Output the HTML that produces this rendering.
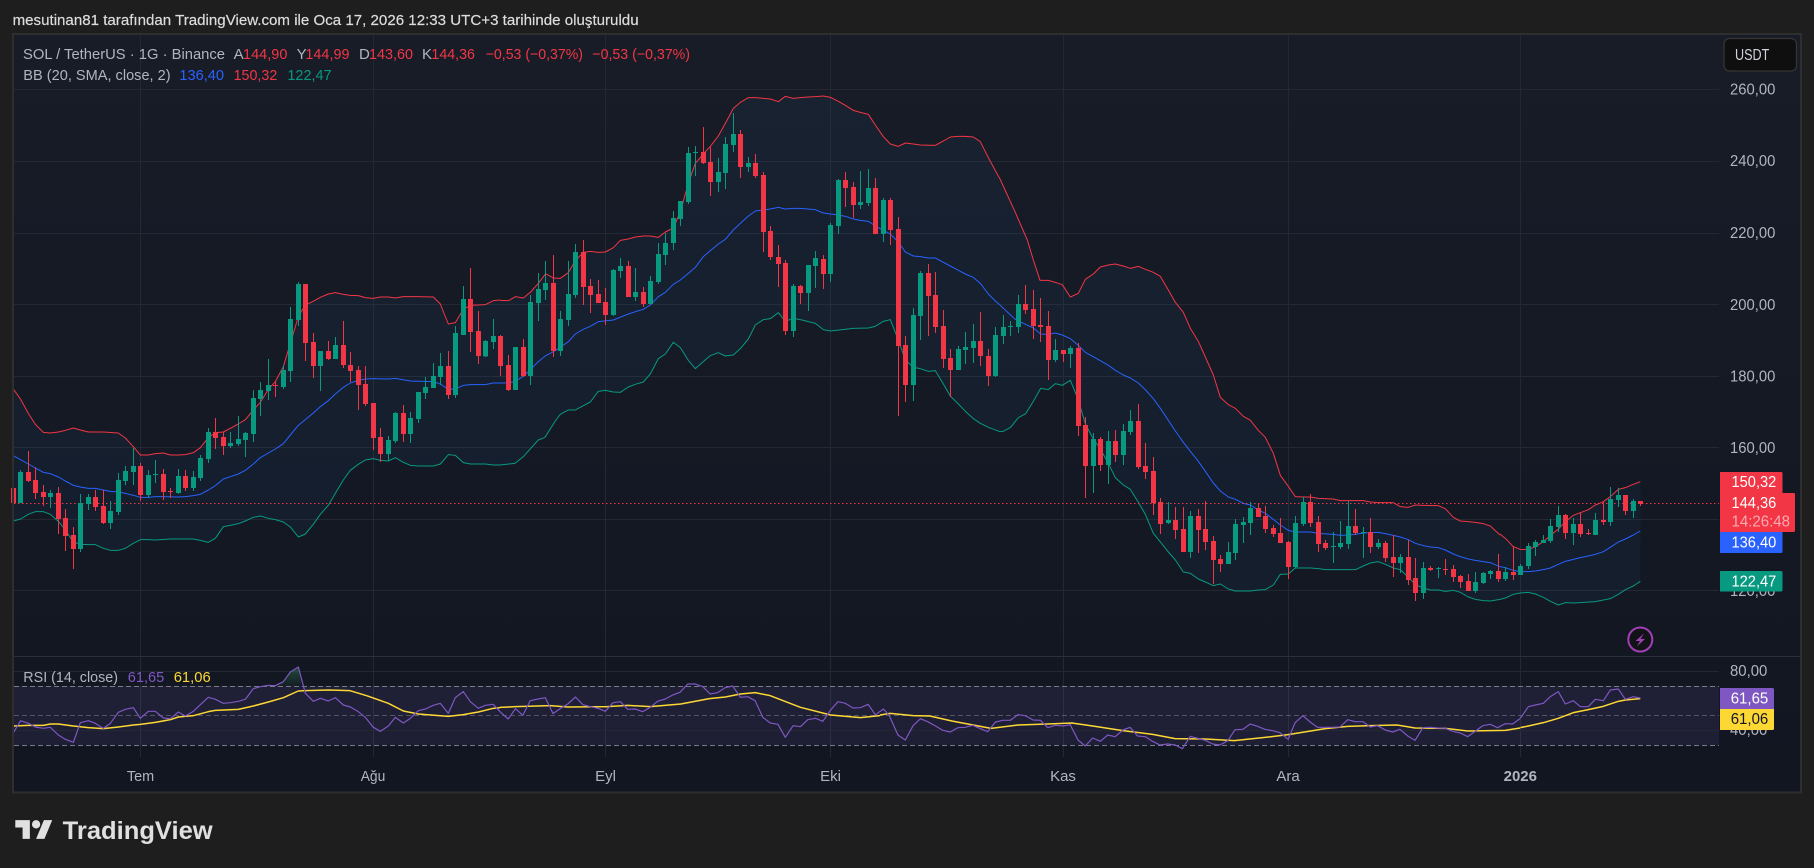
<!DOCTYPE html>
<html lang="tr">
<head>
<meta charset="utf-8">
<title>SOL / TetherUS</title>
<style>
html,body{margin:0;padding:0;background:#1e1e1e;width:1814px;height:868px;overflow:hidden}
svg{position:absolute;left:0;top:0;display:block}
text{font-family:"Liberation Sans",sans-serif}
.f{fill:rgba(33,150,243,.05);fill-rule:evenodd;stroke:none}
.l{fill:none;stroke-width:3;stroke-linejoin:round}
.u{stroke:#f23645}.m{stroke:#2962ff}.w{stroke:#089981}
.rb{fill:none;stroke:#f23645;stroke-width:5}
.rw{fill:none;stroke:#f23645;stroke-width:1}
.gb{fill:none;stroke:#089981;stroke-width:5}
.gw{fill:none;stroke:#089981;stroke-width:1}
.r{fill:none;stroke:#7e57c2;stroke-width:1.2;vector-effect:non-scaling-stroke;stroke-linejoin:round}
.y{fill:none;stroke:#fdd835;stroke-width:1.5;vector-effect:non-scaling-stroke;stroke-linejoin:round}
.a{font-size:16px;fill:#b2b5be}
.lg{font-size:15px}
.lb{font-size:16px;fill:#fff}
.t{font-size:15px;fill:#b2b5be}
</style>
</head>
<body>
<svg width="1814" height="868" viewBox="0 0 1814 868" xmlns="http://www.w3.org/2000/svg">
<defs>
<linearGradient id="bg" x1="0" y1="0" x2="0" y2="1"><stop offset="0" stop-color="#181c27"/><stop offset="1" stop-color="#121621"/></linearGradient>
<linearGradient id="ob" x1="0" y1="0" x2="0" y2="1"><stop offset="0" stop-color="#2e7d4f" stop-opacity=".5"/><stop offset="1" stop-color="#2e7d4f" stop-opacity=".08"/></linearGradient>
</defs>
<rect width="1814" height="868" fill="#1e1e1e"/>
<text x="12.6" y="25" font-size="15" fill="#dcdcdc" stroke="#dcdcdc" stroke-width=".2" textLength="626" lengthAdjust="spacingAndGlyphs">mesutinan81 tarafından TradingView.com ile Oca 17, 2026 12:33 UTC+3 tarihinde oluşturuldu</text>
<rect x="13" y="34" width="1788" height="758" fill="url(#bg)"/>

<!-- grid -->
<path fill="none" stroke="#242833" stroke-width="1" d="M14 89.5H1719M14 161.5H1719M14 233.5H1719M14 304.5H1719M14 376.5H1719M14 447.5H1719M14 519.5H1719M14 590.5H1719M140.5 35V757M373.5 35V757M605.5 35V757M830.5 35V757M1063.5 35V757M1288.5 35V757M1520.5 35V757"/>

<!-- RSI band -->
<rect x="14" y="686" width="1705" height="59" fill="#7e57c2" fill-opacity=".12"/>
<path fill="none" stroke="#242833" stroke-width="1" d="M14 671.5H1719M14 730.5H1719"/>
<path d="M14 686.5H1719M14 745.5H1719" fill="none" stroke="#787b86" stroke-width="1" stroke-dasharray="5 3"/>
<path d="M14 715.5H1719" fill="none" stroke="#787b86" stroke-opacity=".6" stroke-width="1" stroke-dasharray="5 3"/>
<path d="M13 656.5H1801" stroke="#2b2f3a" stroke-width="1" fill="none"/>

<!-- BB zone 1 -->
<g transform="translate(0,280) scale(.33333)">
<path class="f" d="M40 327 62 358 85 400 106 433 130 457 151 459 175 456 196 451 220 444 241 450 265 456 310 456 355 459 376 474 400 500 421 525 445 525 466 521 490 519 511 525 535 525 556 524 580 518 601 503 625 473 646 458 670 456 691 445 715 432 736 419 760 390 781 367 805 328 826 305 850 260 871 190 895 110 916 75 940 64 961 52 985 42 1006 38 1030 43 1051 46 1075 47 1096 53 1120 55 1141 51 1165 51 1186 54 1210 50 1255 50 1300 51 1321 72 1345 132 1366 128 1390 88 1411 76 1456 74 1480 62 1500 60V1000H40ZM40 723 62 717 85 703 106 695 130 695 151 703 175 724 196 750 220 786 241 793 265 794 286 794 310 805 331 811 355 811 376 805 400 790 421 779 445 779 466 780 511 777 580 777 601 781 625 787 646 775 670 740 691 736 715 731 736 723 760 712 781 708 805 715 826 719 850 726 871 741 895 771 916 762 940 733 961 703 985 676 1006 640 1030 600 1051 571 1075 553 1096 540 1120 536 1141 541 1165 543 1186 533 1210 547 1231 556 1255 558 1300 558 1321 552 1345 524 1366 526 1390 548 1411 552 1456 552 1480 555 1500 555V1000H40Z"/>
<path class="l u" d="M40 327 62 358 85 400 106 433 130 457 151 459 175 456 196 451 220 444 241 450 265 456 310 456 355 459 376 474 400 500 421 525 445 525 466 521 490 519 511 525 535 525 556 524 580 518 601 503 625 473 646 458 670 456 691 445 715 432 736 419 760 390 781 367 805 328 826 305 850 260 871 190 895 110 916 75 940 64 961 52 985 42 1006 38 1030 43 1051 46 1075 47 1096 53 1120 55 1141 51 1165 51 1186 54 1210 50 1255 50 1300 51 1321 72 1345 132 1366 128 1390 88 1411 76 1456 74 1480 62 1500 60"/>
<path class="l w" d="M40 723 62 717 85 703 106 695 130 695 151 703 175 724 196 750 220 786 241 793 265 794 286 794 310 805 331 811 355 811 376 805 400 790 421 779 445 779 466 780 511 777 580 777 601 781 625 787 646 775 670 740 691 736 715 731 736 723 760 712 781 708 805 715 826 719 850 726 871 741 895 771 916 762 940 733 961 703 985 676 1006 640 1030 600 1051 571 1075 553 1096 540 1120 536 1141 541 1165 543 1186 533 1210 547 1231 556 1255 558 1300 558 1321 552 1345 524 1366 526 1390 548 1411 552 1456 552 1480 555 1500 555"/>
<path class="l m" d="M40 527 62 539 85 552 106 564 130 577 151 581 175 591 196 603 220 616 241 621 265 625 286 625 310 630 331 634 355 636 376 640 400 646 421 652 445 652 466 650 490 650 535 651 556 650 580 647 601 643 625 630 646 617 670 597 691 590 715 582 736 571 760 552 781 533 805 519 826 507 850 491 871 465 895 436 916 419 940 399 961 380 985 362 1006 342 1030 322 1051 309 1075 301 1096 297 1120 296 1165 297 1186 295 1231 303 1300 305 1321 312 1345 328 1366 327 1390 316 1411 314 1456 314 1480 309 1500 309"/>
</g>
<!-- BB zone 2 -->
<g transform="translate(500,80) scale(.33333)">
<path class="f" d="M0 661 25 662 46 650 70 654 92 636 115 610 137 581 160 594 181 595 205 578 226 542 250 517 271 514 295 517 316 516 340 503 361 481 385 477 406 471 430 468 451 468 475 472 496 456 520 444 541 395 565 310 586 250 610 222 631 199 655 168 676 130 700 85 721 67 745 53 766 53 790 55 811 57 835 65 856 49 880 55 901 53 925 51 946 50 970 48 991 52 1015 64 1036 76 1060 91 1081 97 1105 103 1126 135 1150 170 1171 192 1195 199 1216 189 1240 192 1261 195 1306 196 1330 183 1351 171 1375 169 1396 169 1420 171 1441 185 1465 233 1486 272 1500 297V1300H0ZM0 1155 45 1150 70 1130 115 1080 135 1072 168 1020 181 1003 205 990 226 990 250 977 271 966 295 934 316 931 340 936 361 937 385 921 406 913 430 906 451 882 475 836 496 822 520 787 541 803 565 841 586 866 610 845 631 827 655 818 676 828 700 825 721 806 745 777 766 735 790 719 811 716 835 698 856 724 880 715 901 719 946 730 970 749 991 753 1060 745 1105 744 1126 739 1150 724 1171 719 1195 780 1216 840 1240 862 1261 866 1285 874 1306 872 1330 912 1351 948 1375 972 1396 994 1420 1016 1441 1030 1465 1042 1500 1055V1300H0Z"/>
<path class="l u" d="M0 661 25 662 46 650 70 654 92 636 115 610 137 581 160 594 181 595 205 578 226 542 250 517 271 514 295 517 316 516 340 503 361 481 385 477 406 471 430 468 451 468 475 472 496 456 520 444 541 395 565 310 586 250 610 222 631 199 655 168 676 130 700 85 721 67 745 53 766 53 790 55 811 57 835 65 856 49 880 55 901 53 925 51 946 50 970 48 991 52 1015 64 1036 76 1060 91 1081 97 1105 103 1126 135 1150 170 1171 192 1195 199 1216 189 1240 192 1261 195 1306 196 1330 183 1351 171 1375 169 1396 169 1420 171 1441 185 1465 233 1486 272 1500 297"/>
<path class="l w" d="M0 1155 45 1150 70 1130 115 1080 135 1072 168 1020 181 1003 205 990 226 990 250 977 271 966 295 934 316 931 340 936 361 937 385 921 406 913 430 906 451 882 475 836 496 822 520 787 541 803 565 841 586 866 610 845 631 827 655 818 676 828 700 825 721 806 745 777 766 735 790 719 811 716 835 698 856 724 880 715 901 719 946 730 970 749 991 753 1060 745 1105 744 1126 739 1150 724 1171 719 1195 780 1216 840 1240 862 1261 866 1285 874 1306 872 1330 912 1351 948 1375 972 1396 994 1420 1016 1441 1030 1465 1042 1500 1055"/>
<path class="l m" d="M0 909 25 909 46 904 70 889 92 868 115 845 137 827 160 815 181 802 205 785 226 762 250 748 271 739 295 725 340 720 385 702 406 695 430 688 451 675 475 650 496 637 520 613 541 600 565 580 586 562 610 530 631 512 655 492 676 478 700 450 721 430 745 408 766 393 790 390 811 387 835 382 856 387 880 385 901 385 946 389 970 399 991 402 1015 405 1036 409 1060 417 1081 421 1105 424 1126 438 1150 451 1171 462 1195 486 1216 516 1240 528 1261 530 1285 534 1306 534 1330 547 1351 558 1375 571 1396 582 1420 592 1441 610 1465 642 1486 663 1500 675"/>
</g>
<!-- BB zone 3 -->
<g transform="translate(1000,240) scale(.33333)">
<path class="f" d="M0 -183 45 -85 82 0 100 60 120 121 145 121 166 127 187 134 211 171 235 160 256 118 280 102 301 81 325 75 346 72 370 78 391 85 415 79 436 88 460 97 481 109 505 150 526 187 550 217 571 265 595 304 616 351 640 405 661 472 685 494 706 505 730 529 751 541 775 571 796 592 820 640 841 706 865 739 886 770 910 771 931 771 955 775 1000 777 1021 782 1045 782 1090 782 1111 786 1135 788 1180 788 1201 800 1225 802 1246 795 1270 796 1315 797 1336 806 1360 832 1381 843 1405 845 1426 847 1450 851 1471 858 1500 885V1200H0ZM0 575 10 574 32 562 55 533 77 521 100 484 122 445 145 449 166 431 187 436 211 421 235 480 256 552 280 597 301 627 325 670 346 713 370 735 391 748 415 787 436 823 460 880 481 906 505 936 526 960 550 996 571 1000 595 1017 616 1026 640 1037 661 1032 685 1047 706 1053 751 1053 775 1050 796 1049 820 1035 841 1003 865 1002 886 984 931 984 955 986 976 989 1066 989 1090 978 1111 969 1135 965 1156 973 1180 984 1201 989 1225 1012 1246 1034 1270 1044 1291 1050 1315 1050 1336 1054 1360 1051 1381 1057 1405 1071 1426 1078 1450 1082 1471 1083 1500 1078V1200H0Z"/>
<path class="l u" d="M0 -183 45 -85 82 0 100 60 120 121 145 121 166 127 187 134 211 171 235 160 256 118 280 102 301 81 325 75 346 72 370 78 391 85 415 79 436 88 460 97 481 109 505 150 526 187 550 217 571 265 595 304 616 351 640 405 661 472 685 494 706 505 730 529 751 541 775 571 796 592 820 640 841 706 865 739 886 770 910 771 931 771 955 775 1000 777 1021 782 1045 782 1090 782 1111 786 1135 788 1180 788 1201 800 1225 802 1246 795 1270 796 1315 797 1336 806 1360 832 1381 843 1405 845 1426 847 1450 851 1471 858 1500 885"/>
<path class="l w" d="M0 575 10 574 32 562 55 533 77 521 100 484 122 445 145 449 166 431 187 436 211 421 235 480 256 552 280 597 301 627 325 670 346 713 370 735 391 748 415 787 436 823 460 880 481 906 505 936 526 960 550 996 571 1000 595 1017 616 1026 640 1037 661 1032 685 1047 706 1053 751 1053 775 1050 796 1049 820 1035 841 1003 865 1002 886 984 931 984 955 986 976 989 1066 989 1090 978 1111 969 1135 965 1156 973 1180 984 1201 989 1225 1012 1246 1034 1270 1044 1291 1050 1315 1050 1336 1054 1360 1051 1381 1057 1405 1071 1426 1078 1450 1082 1471 1083 1500 1078"/>
<path class="l m" d="M0 195 25 219 46 238 70 250 100 264 122 282 145 283 166 279 187 285 211 296 235 316 256 337 280 350 301 362 325 376 346 391 370 405 391 414 415 429 436 449 460 476 481 505 505 541 526 573 550 607 571 634 595 664 616 694 640 729 661 753 685 771 706 778 730 790 751 795 775 810 796 820 820 838 841 855 865 871 886 876 931 876 955 880 1000 883 1021 886 1045 885 1066 883 1090 879 1135 877 1156 881 1180 886 1201 891 1225 899 1246 910 1270 917 1291 921 1315 923 1336 930 1360 942 1381 950 1405 957 1426 961 1450 965 1471 968 1500 980"/>
</g>
<!-- BB zone 4 -->
<g transform="translate(1500,440) scale(.33333)">
<path class="f" d="M0 282 16 295 40 320 61 328 85 329 106 320 130 305 151 287 175 267 196 245 220 226 241 218 265 209 286 195 310 185 331 170 355 148 376 143 400 133 421 125V600H0ZM0 478 16 474 40 463 61 459 85 457 106 462 130 472 151 484 175 495 196 488 220 489 241 488 286 485 310 480 331 476 355 463 376 449 400 438 421 424V600H0Z"/>
<path class="l u" d="M0 282 16 295 40 320 61 328 85 329 106 320 130 305 151 287 175 267 196 245 220 226 241 218 265 209 286 195 310 185 331 170 355 148 376 143 400 133 421 125"/>
<path class="l w" d="M0 478 16 474 40 463 61 459 85 457 106 462 130 472 151 484 175 495 196 488 220 489 241 488 286 485 310 480 331 476 355 463 376 449 400 438 421 424"/>
<path class="l m" d="M0 380 16 383 40 391 61 395 85 395 106 393 130 389 151 384 175 373 196 364 220 358 241 353 265 348 286 343 310 335 331 322 355 306 376 297 400 285 421 273"/>
</g>

<!-- last price line -->
<path d="M14 503.5H1719" stroke="#f23645" stroke-width="1" stroke-dasharray="1.5 2.5" fill="none"/>

<!-- candles -->
<g transform="translate(0,280) scale(1,.33333)">
<path class="rw" d="M13.5 624V695M28.5 513V606M35.5 562V657M43.5 615V678M58.5 621V762M65.5 687V813M73.5 741V867M95.5 630V693M103.5 630V732M140.5 549V663M163.5 567V660M170.5 624V654M185.5 570V633M215.5 414V507M223.5 456V525M275.5 303V351M305.5 12V243M313.5 159V294M328.5 183V240M343.5 123V264M350.5 216V306M358.5 258V390M365.5 258V378M373.5 369V510M380.5 444V546M403.5 375V486M448.5 213V357M470.5 -36V216M478.5 93V252"/>
<path class="rb" d="M13.5 624V669M28.5 576V603M35.5 600V639M43.5 636V651M58.5 639V717M65.5 714V768M73.5 765V807M95.5 651V681M103.5 678V729M140.5 558V645M163.5 582V636M170.5 633V636M185.5 588V624M215.5 456V474M223.5 471V498M275.5 315V318M305.5 12V189M313.5 186V258M328.5 213V237M343.5 195V255M350.5 255V273M358.5 270V315M365.5 312V372M373.5 369V474M380.5 471V522M403.5 399V462M448.5 258V345M470.5 57V156M478.5 153V228"/>
<path class="gw" d="M20.5 570V669M50.5 630V684M80.5 642V816M88.5 642V690M110.5 663V747M118.5 579V705M125.5 558V615M133.5 504V615M148.5 570V654M155.5 540V609M178.5 567V642M193.5 573V633M200.5 525V603M208.5 444V549M230.5 456V504M238.5 408V498M245.5 456V531M253.5 330V486M260.5 306V408M268.5 237V360M283.5 255V327M290.5 81V306M298.5 6V138M320.5 213V333M335.5 171V237M388.5 468V543M395.5 396V489M410.5 396V489M418.5 336V429M425.5 291V357M433.5 249V324M440.5 219V315M455.5 138V354M463.5 18V165M485.5 180V231M493.5 117V207"/>
<path class="gb" d="M20.5 576V669M50.5 639V651M80.5 669V807M88.5 651V672M110.5 693V729M118.5 600V696M125.5 573V603M133.5 558V576M148.5 585V645M155.5 582V585M178.5 588V639M193.5 591V624M200.5 534V594M208.5 456V537M230.5 489V498M238.5 477V492M245.5 459V480M253.5 354V462M260.5 330V357M268.5 315V333M283.5 270V321M290.5 117V273M298.5 12V120M320.5 213V258M335.5 195V237M388.5 480V522M395.5 399V483M410.5 414V462M418.5 336V417M425.5 321V339M433.5 288V324M440.5 258V291M455.5 159V345M463.5 57V165M485.5 183V229M493.5 168V186"/>
</g>
<g transform="translate(0,80) scale(1,.33333)">
<path class="rw" d="M500.5 765V888M508.5 825V933M523.5 777V891M553.5 525V831M583.5 480V675M590.5 597V699M598.5 600V669M605.5 624V735M628.5 543V651M643.5 621V681M703.5 141V252M710.5 201V348M740.5 150V294M755.5 222V294M763.5 276V516M770.5 438V540M778.5 495V621M785.5 540V765M800.5 615V672M823.5 525V627M845.5 276V381M853.5 306V414M875.5 294V462M890.5 354V495M898.5 411V1008M905.5 768V966M928.5 552V768M935.5 576V759M943.5 690V864M950.5 807V951M980.5 696V858M988.5 807V918"/>
<path class="rb" d="M500.5 768V858M508.5 855V930M523.5 801V888M553.5 609V813M583.5 516V621M590.5 618V645M598.5 642V669M605.5 666V705M628.5 558V651M643.5 636V672M703.5 216V249M710.5 246V306M740.5 162V261M755.5 249V288M763.5 285V456M770.5 453V531M778.5 531V552M785.5 549V753M800.5 618V639M823.5 537V582M845.5 300V324M853.5 321V375M875.5 324V462M890.5 360V450M898.5 447V798M905.5 795V915M928.5 579V648M935.5 645V741M943.5 738V837M950.5 834V870M980.5 783V828M988.5 828V888"/>
<path class="gw" d="M515.5 801V930M530.5 645V915M538.5 579V723M545.5 543V660M560.5 693V828M568.5 543V738M575.5 492V654M613.5 567V708M620.5 534V594M635.5 564V663M650.5 588V672M658.5 489V612M665.5 459V555M673.5 393V510M680.5 363V438M688.5 201V372M695.5 198V288M718.5 234V336M725.5 171V327M733.5 99V216M748.5 231V276M793.5 612V771M808.5 555V693M815.5 513V624M830.5 429V606M838.5 297V462M860.5 273V387M868.5 267V378M883.5 354V486M913.5 684V963M920.5 573V780M958.5 798V870M965.5 756V852M973.5 732V849M995.5 741V891"/>
<path class="gb" d="M515.5 801V930M530.5 666V888M538.5 627V669M545.5 609V630M560.5 717V813M568.5 642V720M575.5 516V645M613.5 570V705M620.5 558V573M635.5 636V651M650.5 603V672M658.5 522V606M665.5 489V525M673.5 414V489M680.5 363V417M688.5 219V366M695.5 216V219M718.5 276V306M725.5 192V279M733.5 162V195M748.5 249V261M793.5 618V753M808.5 555V639M815.5 534V558M830.5 435V582M838.5 300V438M860.5 366V375M868.5 324V369M883.5 360V462M913.5 705V915M920.5 579V708M958.5 807V870M965.5 801V810M973.5 783V804M995.5 765V888"/>
</g>
<g transform="translate(0,240) scale(1,.33333)">
<path class="rw" d="M1025.5 135V222M1033.5 150V297M1040.5 174V306M1048.5 213V420M1063.5 330V366M1078.5 309V588M1085.5 531V774M1100.5 591V693M1115.5 570V666M1138.5 492V687M1145.5 609V717M1153.5 651V825M1160.5 774V882M1175.5 801V897M1183.5 801V936M1198.5 807V939M1205.5 783V930M1213.5 888V1032M1220.5 945V996M1258.5 789V831M1265.5 798V879M1273.5 855V891M1280.5 834V909M1288.5 903V1017M1310.5 762V861M1318.5 828V936M1325.5 900V930M1355.5 807V885M1370.5 834V939M1385.5 903V966M1393.5 885V1011M1408.5 900V1035M1415.5 954V1083M1430.5 978V993M1445.5 957V1005M1453.5 975V1026M1460.5 1005V1044M1468.5 1002V1053M1498.5 942V1026"/>
<path class="rb" d="M1025.5 192V210M1033.5 207V258M1040.5 255V261M1048.5 258V360M1063.5 330V342M1078.5 324V558M1085.5 555V678M1100.5 597V675M1115.5 603V645M1138.5 543V681M1145.5 678V696M1153.5 693V789M1160.5 786V852M1175.5 840V870M1183.5 867V936M1198.5 828V870M1205.5 867V906M1213.5 903V960M1220.5 957V972M1258.5 804V831M1265.5 828V867M1273.5 864V882M1280.5 879V909M1288.5 906V981M1310.5 786V849M1318.5 846V912M1325.5 909V924M1355.5 858V879M1370.5 876V921M1385.5 909V954M1393.5 951V969M1408.5 951V1020M1415.5 1014V1059M1430.5 984V990M1445.5 987V990M1453.5 987V1011M1460.5 1008V1026M1468.5 1023V1053M1498.5 993V1017"/>
<path class="gw" d="M1003.5 225V312M1010.5 243V288M1018.5 165V279M1055.5 297V366M1070.5 318V384M1093.5 579V759M1108.5 573V732M1123.5 552V675M1130.5 510V585M1168.5 786V852M1190.5 813V954M1228.5 906V972M1235.5 837V960M1243.5 831V909M1250.5 786V885M1295.5 828V984M1303.5 771V858M1333.5 876V969M1340.5 843V927M1348.5 783V927M1363.5 861V954M1378.5 897V927M1400.5 942V999M1423.5 966V1077M1438.5 981V1014M1475.5 996V1059M1483.5 996V1032M1490.5 990V1017"/>
<path class="gb" d="M1003.5 261V288M1010.5 258V261M1018.5 192V261M1055.5 330V360M1070.5 324V342M1093.5 597V678M1108.5 603V675M1123.5 573V645M1130.5 543V576M1168.5 840V849M1190.5 828V936M1228.5 936V972M1235.5 852V939M1243.5 846V855M1250.5 804V849M1295.5 849V981M1303.5 786V852M1333.5 918V921M1340.5 909V921M1348.5 858V912M1363.5 876V879M1378.5 909V921M1400.5 951V969M1423.5 984V1059M1438.5 984V987M1475.5 1026V1053M1483.5 999V1029M1490.5 993V1002"/>
</g>
<g transform="translate(0,440) scale(1,.33333)">
<path class="rw" d="M1513.5 318V420M1565.5 222V297M1580.5 219V291M1588.5 267V285M1603.5 186V255M1625.5 165V225M1640.5 183V198"/>
<path class="rb" d="M1513.5 396V405M1565.5 225V279M1580.5 252V282M1588.5 279V282M1603.5 240V246M1625.5 165V213M1640.5 183V192"/>
<path class="gw" d="M1505.5 381V423M1520.5 372V405M1528.5 309V387M1535.5 300V348M1543.5 285V309M1550.5 237V309M1558.5 198V276M1573.5 234V315M1595.5 219V285M1610.5 141V258M1618.5 144V201M1633.5 177V234"/>
<path class="gb" d="M1505.5 396V417M1520.5 378V405M1528.5 318V378M1535.5 306V321M1543.5 300V309M1550.5 258V303M1558.5 225V261M1573.5 252V279M1595.5 240V285M1610.5 177V246M1618.5 165V180M1633.5 183V213"/>
</g>

<!-- RSI -->
<path d="M275.5 686 283.3 681.7 290.3 672 298.3 667 301.7 686Z" fill="url(#ob)"/>
<g transform="translate(0,640) scale(.33333)">
<path class="y" d="M40 258 85 256 130 256 151 252 175 252 220 258 265 263 310 266 355 261 400 255 421 253 466 247 511 239 535 231 580 227 625 215 646 211 715 208 760 198 805 186 850 173 895 153 916 152 985 150 1050 152 1100 167 1165 190 1210 213 1255 222 1345 229 1390 224 1435 216 1480 205 1500 203"/>
<path class="r" d="M40 278 62 242 85 250 106 261 130 265 151 262 175 285 196 298 220 307 241 248 265 242 286 250 310 265 331 250 355 217 376 208 400 203 421 235 445 214 466 214 490 234 511 236 535 216 556 228 580 214 601 194 625 172 646 178 670 190 691 188 715 184 736 178 760 146 781 140 805 136 826 137 850 125 871 96 895 81 916 160 940 184 961 175 985 183 1006 173 1030 195 1051 201 1075 215 1096 232 1120 262 1141 274 1165 258 1186 232 1210 249 1231 235 1255 212 1276 207 1300 196 1321 190 1345 220 1366 173 1390 155 1411 185 1435 205 1456 196 1480 193 1500 215"/>
</g>
<g transform="translate(240,650) scale(.40816,.33333)">
<path class="y" d="M637 172 675 170 760 167 803 171 900 170 950 166 1005 170 1080 162 1150 146 1189 141 1226 132 1262 128 1299 137 1373 172 1447 195 1520 203 1568 197"/>
<path class="r" d="M637 185 657 207 675 176 693 196 711 152 730 147 748 143 767 191 785 175 803 162 822 141 840 164 859 170 877 175 895 184 914 158 932 155 950 178 968 177 987 185 1005 172 1023 154 1042 147 1060 135 1078 127 1097 102 1115 102 1134 110 1152 132 1170 128 1189 113 1207 108 1226 142 1244 140 1262 152 1281 202 1299 219 1318 223 1336 262 1355 227 1373 230 1391 209 1410 205 1428 214 1447 180 1465 155 1483 160 1502 174 1520 173 1539 163 1557 195 1568 184"/>
</g>
<g transform="translate(880,650) scale(.40816,.33333)">
<path class="y" d="M0 195 25 190 81 197 122 198 176 213 272 235 338 225 411 222 470 219 521 228 595 242 668 253 723 266 797 267 868 272 960 260 1000 254 1091 236 1146 229 1201 227 1266 225 1311 234 1385 235 1440 243 1532 241 1568 234"/>
<path class="r" d="M0 185 8 177 22 195 44 255 62 270 81 227 99 206 117 215 136 228 154 241 172 246 191 233 209 232 227 226 246 236 264 245 283 216 301 211 319 211 338 194 356 197 375 210 393 211 411 233 430 226 448 228 466 224 485 270 503 288 521 264 540 274 558 255 576 260 595 240 613 232 631 258 650 260 668 274 686 285 705 282 723 285 741 296 760 259 778 265 797 271 815 282 833 285 852 272 870 239 889 238 907 222 925 229 943 238 962 242 980 248 1000 268 1017 218 1036 197 1054 216 1072 232 1091 232 1109 232 1127 231 1146 209 1164 215 1183 215 1201 231 1219 227 1238 240 1256 246 1274 238 1293 258 1311 271 1330 233 1348 232 1366 234 1385 235 1403 244 1422 249 1440 260 1458 244 1477 227 1495 223 1513 233 1532 221 1550 222 1568 206"/>
</g>
<g transform="translate(1500,440) scale(.33333)">
<path class="y" d="M61 863 85 858 130 848 175 835 220 818 265 809 310 799 355 784 376 780 421 776"/>
<path class="r" d="M61 835 85 800 106 795 130 790 151 770 175 755 196 792 220 782 241 800 265 800 286 778 310 782 331 750 355 747 376 778 400 770 421 774"/>
</g>

<!-- legend -->
<g class="lg">
<text x="23" y="59" fill="#b2b5be" textLength="202" lengthAdjust="spacingAndGlyphs">SOL / TetherUS · 1G · Binance</text>
<text x="233.6" y="59" fill="#b2b5be">A</text><text x="243" y="59" fill="#f23645" textLength="44.4" lengthAdjust="spacingAndGlyphs">144,90</text>
<text x="296.6" y="59" fill="#b2b5be">Y</text><text x="305.4" y="59" fill="#f23645" textLength="44.1" lengthAdjust="spacingAndGlyphs">144,99</text>
<text x="359" y="59" fill="#b2b5be">D</text><text x="369" y="59" fill="#f23645" textLength="44" lengthAdjust="spacingAndGlyphs">143,60</text>
<text x="422" y="59" fill="#b2b5be">K</text><text x="431.4" y="59" fill="#f23645" textLength="43.6" lengthAdjust="spacingAndGlyphs">144,36</text>
<text x="485.7" y="59" fill="#f23645" textLength="97.3" lengthAdjust="spacingAndGlyphs">−0,53 (−0,37%)</text>
<text x="592.3" y="59" fill="#f23645" textLength="97.7" lengthAdjust="spacingAndGlyphs">−0,53 (−0,37%)</text>
<text x="23.3" y="80" fill="#b2b5be" textLength="147.3" lengthAdjust="spacingAndGlyphs">BB (20, SMA, close, 2)</text>
<text x="179.4" y="80" fill="#2962ff" textLength="44.6" lengthAdjust="spacingAndGlyphs">136,40</text>
<text x="233.6" y="80" fill="#f23645" textLength="43.7" lengthAdjust="spacingAndGlyphs">150,32</text>
<text x="287.4" y="80" fill="#089981" textLength="44.2" lengthAdjust="spacingAndGlyphs">122,47</text>
<text x="23.3" y="682" fill="#b2b5be" textLength="94.7" lengthAdjust="spacingAndGlyphs">RSI (14, close)</text>
<text x="127.7" y="682" fill="#7e57c2" textLength="36.6" lengthAdjust="spacingAndGlyphs">61,65</text>
<text x="173.7" y="682" fill="#fdd835" textLength="37" lengthAdjust="spacingAndGlyphs">61,06</text>
</g>

<!-- price axis -->
<g class="a">
<text x="1730" y="94.5" textLength="45.3" lengthAdjust="spacingAndGlyphs">260,00</text>
<text x="1730" y="166" textLength="45.3" lengthAdjust="spacingAndGlyphs">240,00</text>
<text x="1730" y="238" textLength="45.3" lengthAdjust="spacingAndGlyphs">220,00</text>
<text x="1730" y="310" textLength="45.3" lengthAdjust="spacingAndGlyphs">200,00</text>
<text x="1730" y="381.5" textLength="45.3" lengthAdjust="spacingAndGlyphs">180,00</text>
<text x="1730" y="453" textLength="45.3" lengthAdjust="spacingAndGlyphs">160,00</text>
<text x="1730" y="596" textLength="45.3" lengthAdjust="spacingAndGlyphs">120,00</text>
<text x="1730" y="676" textLength="37.3" lengthAdjust="spacingAndGlyphs">80,00</text>
<text x="1730" y="735" textLength="37.3" lengthAdjust="spacingAndGlyphs">40,00</text>
</g>

<!-- price labels -->
<path d="M1720 472h61a1.5 1.5 0 0 1 1.5 1.5V493H1720Z" fill="#f23645"/>
<path d="M1720 493h73.5a1.5 1.5 0 0 1 1.5 1.5v36a1.5 1.5 0 0 1-1.5 1.5H1720Z" fill="#f23645"/>
<path d="M1720 532h62.5v19.5a1.5 1.5 0 0 1-1.5 1.5h-61Z" fill="#2962ff"/>
<path d="M1720 571h61a1.5 1.5 0 0 1 1.5 1.5V590a1.5 1.5 0 0 1-1.5 1.500h-61Z" fill="#089981"/>
<path d="M1720 688h52.5a1.5 1.5 0 0 1 1.5 1.5V709H1720Z" fill="#7e57c2"/>
<path d="M1720 709h54v19.5a1.5 1.5 0 0 1-1.5 1.5H1720Z" fill="#fdd835"/>
<g class="lb">
<text x="1731.5" y="487" textLength="44.8" lengthAdjust="spacingAndGlyphs">150,32</text>
<text x="1731.5" y="508" textLength="44.8" lengthAdjust="spacingAndGlyphs">144,36</text>
<text x="1731.5" y="526.7" textLength="58.5" lengthAdjust="spacingAndGlyphs" fill="#fba9b0">14:26:48</text>
<text x="1731.5" y="547.3" textLength="44.8" lengthAdjust="spacingAndGlyphs">136,40</text>
<text x="1731.5" y="586.7" textLength="44.8" lengthAdjust="spacingAndGlyphs">122,47</text>
<text x="1730.7" y="703.3" textLength="37.6" lengthAdjust="spacingAndGlyphs">61,65</text>
<text x="1730.7" y="724" textLength="37.6" lengthAdjust="spacingAndGlyphs" fill="#131722">61,06</text>
</g>

<!-- USDT button -->
<rect x="1724" y="38.5" width="72.5" height="32.5" rx="5.5" fill="#0f0f0f" stroke="#363636" stroke-width="1.2"/>
<text x="1735" y="60" font-size="15.5" fill="#d1d4dc" textLength="34.3" lengthAdjust="spacingAndGlyphs">USDT</text>

<!-- lightning -->
<circle cx="1640.3" cy="639.5" r="12" fill="#111317" stroke="#a13fb5" stroke-width="2"/>
<path d="M1644 633.5 1635.5 641 1640 641 1636.8 646.5 1645 639 1640.6 639Z" fill="#a13fb5"/>

<!-- time axis -->
<g class="t" text-anchor="middle">
<text x="140.5" y="781" textLength="27.3" lengthAdjust="spacingAndGlyphs">Tem</text>
<text x="373" y="781" textLength="24.6" lengthAdjust="spacingAndGlyphs">Ağu</text>
<text x="605.5" y="781">Eyl</text>
<text x="830.5" y="781">Eki</text>
<text x="1063" y="781">Kas</text>
<text x="1288" y="781">Ara</text>
<text x="1520.3" y="781" font-weight="700">2026</text>
</g>

<!-- frame -->
<rect x="13" y="34" width="1788" height="758.5" fill="none" stroke="#2e2e2e" stroke-width="2"/>

<!-- logo -->
<g transform="translate(15.3,816) scale(1.04)" fill="#e0e0e0">
<path d="M14 22H7V11H0V4h14v18zM28 22h-8l7.5-18h8L28 22z"/>
<circle cx="20" cy="8" r="4"/>
</g>
<text x="62.7" y="839" font-size="25" font-weight="700" fill="#e0e0e0" textLength="150" lengthAdjust="spacingAndGlyphs">TradingView</text>
</svg>
</body>
</html>
